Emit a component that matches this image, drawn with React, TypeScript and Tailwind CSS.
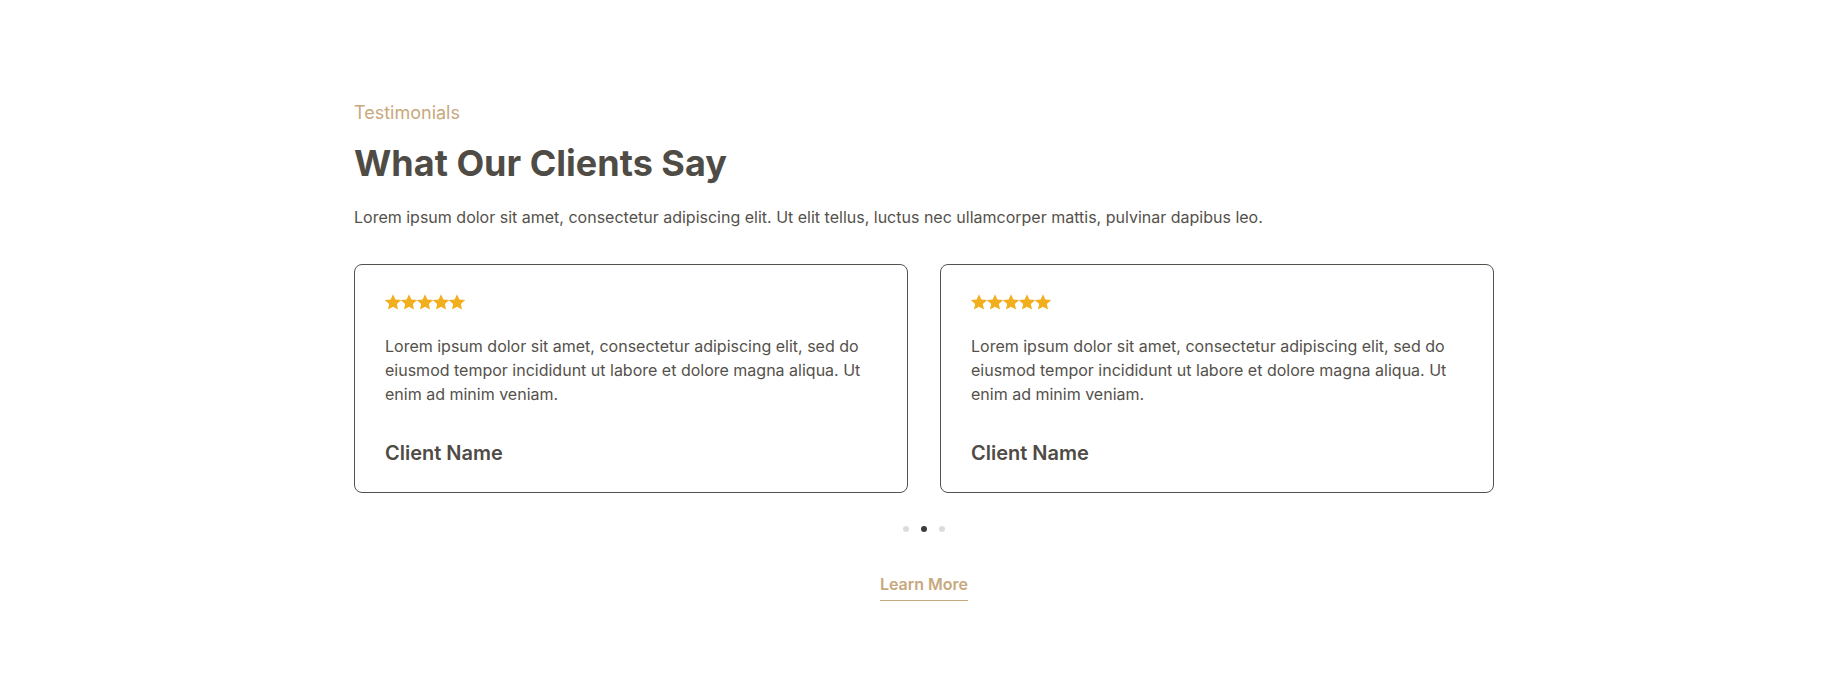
import React from "react";

const Star = () => (
  <svg width="16" height="16" viewBox="1.5 1.5 21 21" fill="#f2ae1c">
    <path d="M12 1.8l3.1 6.9 7.5.8-5.6 5.1 1.6 7.4L12 18.2 5.4 22l1.6-7.4L1.4 9.5l7.5-.8z" />
  </svg>
);

const Card = () => (
  <div className="flex-1 rounded-lg border border-[#55524d] px-[30px] pt-[29px] pb-[27px]">
    <div className="flex h-4 items-center">
      <Star />
      <Star />
      <Star />
      <Star />
      <Star />
    </div>
    <p className="mt-[24px] text-base leading-6 text-[#54514b]">
      Lorem ipsum dolor sit amet, consectetur adipiscing elit, sed do eiusmod tempor incididunt ut labore et dolore magna aliqua. Ut enim ad minim veniam.
    </p>
    <div className="mt-[35px] text-xl font-semibold leading-6 text-[#4f4b45]">Client Name</div>
  </div>
);

export default function App() {
  return (
    <div className="min-h-[679px] bg-white font-['Inter',sans-serif]">
      <section className="mx-auto w-[1140px] pt-[99px]">
        <div className="text-lg leading-[27px] text-[#c8a87d]">Testimonials</div>
        <h2 className="mt-[15px] text-[36px] font-bold leading-[44px] text-[#4f4b45]">
          What Our Clients Say
        </h2>
        <p className="mt-[20px] text-base leading-6 text-[#54514b]">
          Lorem ipsum dolor sit amet, consectetur adipiscing elit. Ut elit tellus, luctus nec ullamcorper mattis, pulvinar dapibus leo.
        </p>
        <div className="mt-[35px] flex gap-8">
          <Card />
          <Card />
        </div>
        <div className="mt-[33px] flex justify-center gap-3">
          <span className="h-[6px] w-[6px] rounded-full bg-[#dcdcdc]" />
          <span className="h-[6px] w-[6px] rounded-full bg-[#3f3d3a]" />
          <span className="h-[6px] w-[6px] rounded-full bg-[#dcdcdc]" />
        </div>
        <div className="mt-[40px] flex justify-center">
          <a className="border-b border-[#c8a87d] pb-[4px] text-base font-semibold leading-6 text-[#c8a87d]" href="#">
            Learn More
          </a>
        </div>
      </section>
    </div>
  );
}
